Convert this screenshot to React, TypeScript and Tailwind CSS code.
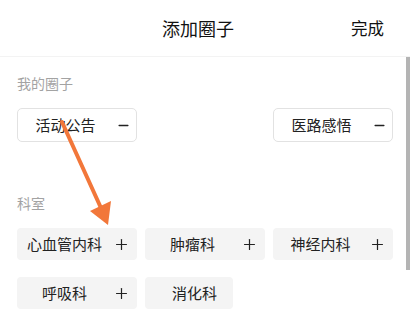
import { Minus, Plus } from "lucide-react";

const font = { fontFamily: '"Noto Sans CJK SC", "Noto Sans", sans-serif' };

function MyChip({ label }: { label: string }) {
  return (
    <div className="flex h-[34px] w-[120px] items-center rounded-[5px] border border-[#e2e2e2] bg-white">
      <span className="w-[95px] text-center text-[15px] text-[#222]">{label}</span>
      <Minus className="ml-[3px] h-[15px] w-[15px] text-[#222]" strokeWidth={2.2} />
    </div>
  );
}

function DeptChip({ label, add = true }: { label: string; add?: boolean }) {
  if (!add) {
    return (
      <div className="flex h-[32px] w-[88px] items-center rounded-[4px] bg-[#f4f4f4] pl-[27px]">
        <span className="text-[15px] text-[#222]">{label}</span>
      </div>
    );
  }
  return (
    <div className="flex h-[32px] w-[120px] items-center rounded-[4px] bg-[#f4f4f4]">
      <span className="w-[95px] text-center text-[15px] text-[#222]">{label}</span>
      <Plus className="ml-[1px] h-[17px] w-[17px] text-[#222]" strokeWidth={1.7} />
    </div>
  );
}

export default function App() {
  return (
    <div className="relative h-[320px] w-[410px] overflow-hidden bg-white" style={font}>
      <header className="relative flex h-[57px] items-center justify-center border-b border-[#f3f3f3]">
        <h1 className="mr-[14px] text-[18px] leading-none text-[#111]">添加圈子</h1>
        <button className="absolute right-[26px] text-[16.5px] leading-none text-[#111]">完成</button>
      </header>

      <section className="px-[17px]">
        <div className="pt-[16px] text-[14px] leading-[20px] text-[#a3a3a3]">我的圈子</div>
        <div className="mt-[15px] grid grid-cols-[120px_120px_120px] gap-x-[8px]">
          <MyChip label="活动公告" />
          <div className="col-start-3">
            <MyChip label="医路感悟" />
          </div>
        </div>
      </section>

      <section className="px-[17px]">
        <div className="pt-[51px] text-[14px] leading-[20px] text-[#a3a3a3]">科室</div>
        <div className="mt-[15px] grid grid-cols-[120px_120px_120px] gap-x-[8px] gap-y-[17px]">
          <DeptChip label="心血管内科" />
          <DeptChip label="肿瘤科" />
          <DeptChip label="神经内科" />
          <DeptChip label="呼吸科" />
          <DeptChip label="消化科" add={false} />
        </div>
      </section>

      {/* annotation arrow */}
      <svg className="pointer-events-none absolute left-0 top-0" width="410" height="320">
        <line x1="62" y1="122" x2="101" y2="208" stroke="#f2773a" strokeWidth="4" strokeLinecap="round" />
        <polygon points="108,225 90,211 111,201" fill="#f2773a" />
      </svg>

      <div className="absolute right-0 top-[57px] h-[213px] w-[4px] bg-[#b4b4b4]" />
    </div>
  );
}
